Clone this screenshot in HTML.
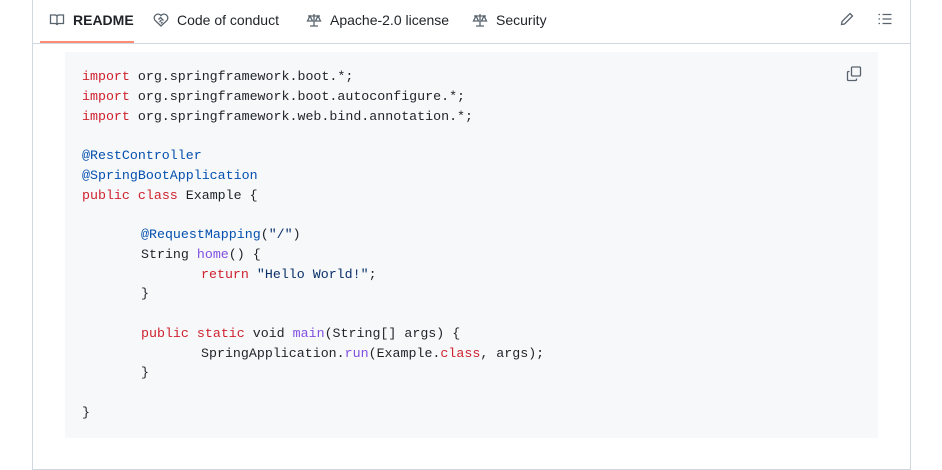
<!DOCTYPE html>
<html><head><style>
body{margin:0;background:#fff;width:942px;height:463px;overflow:hidden;position:relative;font-family:"Liberation Sans",sans-serif;}
.box{position:absolute;left:32px;top:-1px;width:877px;height:470px;border:1px solid #d0d7de;border-top:none;}
.hdr{position:absolute;left:33px;top:0;width:877px;height:43px;border-bottom:1px solid #d0d7de;}
.tab{position:absolute;top:12px;font-size:14px;color:#1f2328;display:flex;align-items:center;gap:8px;}
.tab svg{width:16px;height:16px;fill:none;stroke:#59636e;stroke-width:1.3;}
.ul{position:absolute;left:40px;top:41px;width:94px;height:2px;background:#fd8c73;}
.code{position:absolute;left:65px;top:52px;width:813px;height:386px;background:#f6f8fa;}
pre{position:absolute;left:82px;top:67px;margin:0;font-family:"Liberation Mono",monospace;font-size:13.3px;line-height:19.75px;color:#1f2328;}
.k{color:#cf222e}.a{color:#0550ae}.f{color:#8250df}.s{color:#0a3069}
.i1{padding-left:59px}.i2{padding-left:119px}
</style></head><body>
<div class="box"></div>
<div class="hdr"></div>
<div class="ul"></div>
<div class="tab" style="left:49px;font-weight:bold"><svg viewBox="0 0 16 16"><path d="M1.5 3h4a2 2 0 0 1 2.5 1.5V13a2 2 0 0 0-2-1.5H1.5zM14.5 3h-4A2 2 0 0 0 8 4.5V13a2 2 0 0 1 2-1.5h4.5z"/></svg>README</div>
<div class="tab" style="left:153px"><svg viewBox="0 0 16 16"><path d="M8 14L2 8.3A3.4 3.4 0 0 1 8 3.6a3.4 3.4 0 0 1 6 4.7zM5.5 7.5l2-2 3 3M6.5 10l2-2M8 11.5l1.5-1.5"/></svg>Code of conduct</div>
<div class="tab" style="left:306px"><svg viewBox="0 0 16 16"><path d="M8 2v12M4 14h8M2 4h12M4 4l-2.5 5h5zM12 4l-2.5 5h5z"/></svg>Apache-2.0 license</div>
<div class="tab" style="left:472px"><svg viewBox="0 0 16 16"><path d="M8 2v12M4 14h8M2 4h12M4 4l-2.5 5h5zM12 4l-2.5 5h5z"/></svg>Security</div>
<svg style="position:absolute;left:839px;top:11px" width="16" height="16" viewBox="0 0 16 16" fill="none" stroke="#59636e" stroke-width="1.3"><path d="M11 2.5l2.5 2.5L5.5 13 2.5 13.5 3 10.5z"/></svg>
<svg style="position:absolute;left:877px;top:11px" width="16" height="16" viewBox="0 0 16 16" fill="none" stroke="#59636e" stroke-width="1.3"><path d="M5.5 3.5h9M5.5 8h9M5.5 12.5h9M1.5 3.5h1.5M1.5 8h1.5M1.5 12.5h1.5"/></svg>
<div class="code"></div>
<svg style="position:absolute;left:846px;top:66px" width="16" height="16" viewBox="0 0 16 16" fill="none" stroke="#59636e" stroke-width="1.3"><rect x="5.5" y="1" width="9" height="9" rx="1"/><path d="M3.5 5.5h-1a1 1 0 0 0-1 1v7a1 1 0 0 0 1 1h7a1 1 0 0 0 1-1v-1"/></svg>
<pre><span class="k">import</span> org.springframework.boot.*;
<span class="k">import</span> org.springframework.boot.autoconfigure.*;
<span class="k">import</span> org.springframework.web.bind.annotation.*;

<span class="a">@RestController</span>
<span class="a">@SpringBootApplication</span>
<span class="k">public</span> <span class="k">class</span> Example {

<span class="i1"></span><span class="a">@RequestMapping</span>(<span class="s">"/"</span>)
<span class="i1"></span>String <span class="f">home</span>() {
<span class="i2"></span><span class="k">return</span> <span class="s">"Hello World!"</span>;
<span class="i1"></span>}

<span class="i1"></span><span class="k">public</span> <span class="k">static</span> void <span class="f">main</span>(String[] args) {
<span class="i2"></span>SpringApplication.<span class="f">run</span>(Example.<span class="k">class</span>, args);
<span class="i1"></span>}

}</pre>
</body></html>
